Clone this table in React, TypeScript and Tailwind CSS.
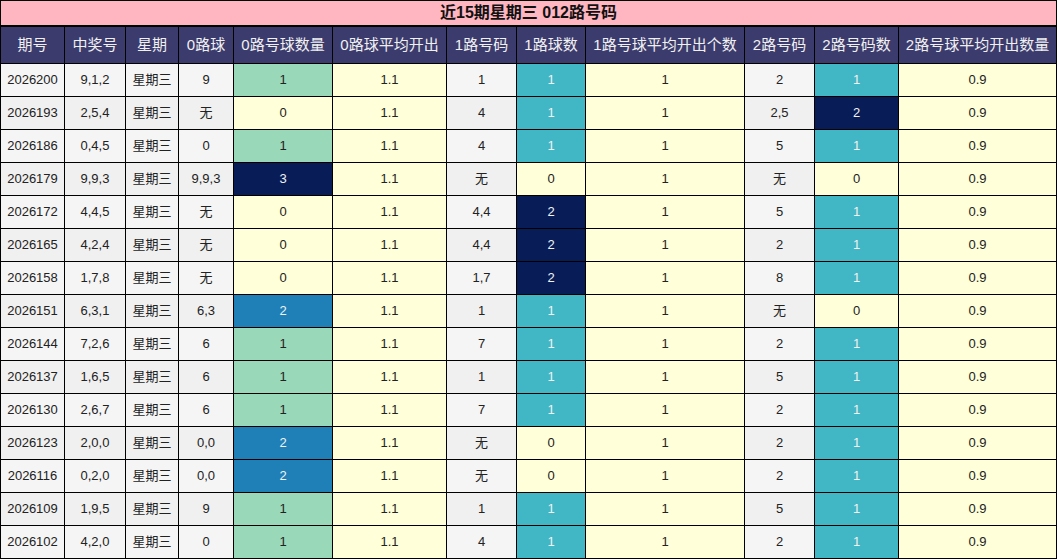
type Heat = "y" | "g" | "t" | "b" | "n";

const heatClass: Record<Heat, string> = {
  y: "bg-[#ffffd9] text-[#222]",
  g: "bg-[#99d8b9] text-[#222]",
  t: "bg-[#41b6c4] text-[#f2f2f2]",
  b: "bg-[#1f80b8] text-[#f2f2f2]",
  n: "bg-[#081d58] text-[#f2f2f2]",
};

const widths = "grid-cols-[64px_61px_53px_55px_99px_114px_70px_69px_159px_70px_84px_158px]";

const headers = [
  "期号",
  "中奖号",
  "星期",
  "0路球",
  "0路号球数量",
  "0路球平均开出",
  "1路号码",
  "1路球数",
  "1路号球平均开出个数",
  "2路号码",
  "2路号码数",
  "2路号球平均开出数量",
];

// [期号, 中奖号, 0路球, 0路数, 0路色, 1路号码, 1路数, 1路色, 2路号码, 2路数, 2路色]
const rows: [string, string, string, string, Heat, string, string, Heat, string, string, Heat][] = [
  ["2026200", "9,1,2", "9", "1", "g", "1", "1", "t", "2", "1", "t"],
  ["2026193", "2,5,4", "无", "0", "y", "4", "1", "t", "2,5", "2", "n"],
  ["2026186", "0,4,5", "0", "1", "g", "4", "1", "t", "5", "1", "t"],
  ["2026179", "9,9,3", "9,9,3", "3", "n", "无", "0", "y", "无", "0", "y"],
  ["2026172", "4,4,5", "无", "0", "y", "4,4", "2", "n", "5", "1", "t"],
  ["2026165", "4,2,4", "无", "0", "y", "4,4", "2", "n", "2", "1", "t"],
  ["2026158", "1,7,8", "无", "0", "y", "1,7", "2", "n", "8", "1", "t"],
  ["2026151", "6,3,1", "6,3", "2", "b", "1", "1", "t", "无", "0", "y"],
  ["2026144", "7,2,6", "6", "1", "g", "7", "1", "t", "2", "1", "t"],
  ["2026137", "1,6,5", "6", "1", "g", "1", "1", "t", "5", "1", "t"],
  ["2026130", "2,6,7", "6", "1", "g", "7", "1", "t", "2", "1", "t"],
  ["2026123", "2,0,0", "0,0", "2", "b", "无", "0", "y", "2", "1", "t"],
  ["2026116", "0,2,0", "0,0", "2", "b", "无", "0", "y", "2", "1", "t"],
  ["2026109", "1,9,5", "9", "1", "g", "1", "1", "t", "5", "1", "t"],
  ["2026102", "4,2,0", "0", "1", "g", "4", "1", "t", "2", "1", "t"],
];

function Cell({ className, children }: { className: string; children: React.ReactNode }) {
  return (
    <div className={`flex items-center justify-center border-r border-b border-black ${className}`}>
      {children}
    </div>
  );
}

export default function App() {
  return (
    <div
      className="w-[1058px] h-[559px] bg-white text-[13px] text-[#222]"
      style={{ fontFamily: '"Liberation Sans", "Noto Sans CJK SC", sans-serif' }}
    >
      <div className="w-[1057px] border-l border-black">
        {/* Title */}
        <div className="h-[27px] flex items-center justify-center bg-[#ffb6c1] border-t border-r border-b-2 border-black text-[16px] font-bold text-[#111]">
          近15期星期三 012路号码
        </div>

        {/* Header */}
        <div className={`grid ${widths} h-[37px]`}>
          {headers.map((h) => (
            <Cell key={h} className="bg-[#3c3b6e] text-[15px] text-[#f0f0f0]">
              {h}
            </Cell>
          ))}
        </div>

        {/* Rows */}
        {rows.map((r, i) => {
          const grey = i % 2 === 0 ? "bg-[#f5f5f5]" : "bg-[#f0f0f0]";
          return (
            <div key={r[0]} className={`grid ${widths} h-[33px]`}>
              <Cell className={grey}>{r[0]}</Cell>
              <Cell className={grey}>{r[1]}</Cell>
              <Cell className={grey}>星期三</Cell>
              <Cell className={grey}>{r[2]}</Cell>
              <Cell className={heatClass[r[4]]}>{r[3]}</Cell>
              <Cell className="bg-[#ffffd9]">1.1</Cell>
              <Cell className={grey}>{r[5]}</Cell>
              <Cell className={heatClass[r[7]]}>{r[6]}</Cell>
              <Cell className="bg-[#ffffd9]">1</Cell>
              <Cell className={grey}>{r[8]}</Cell>
              <Cell className={heatClass[r[10]]}>{r[9]}</Cell>
              <Cell className="bg-[#ffffd9]">0.9</Cell>
            </div>
          );
        })}
      </div>
    </div>
  );
}
